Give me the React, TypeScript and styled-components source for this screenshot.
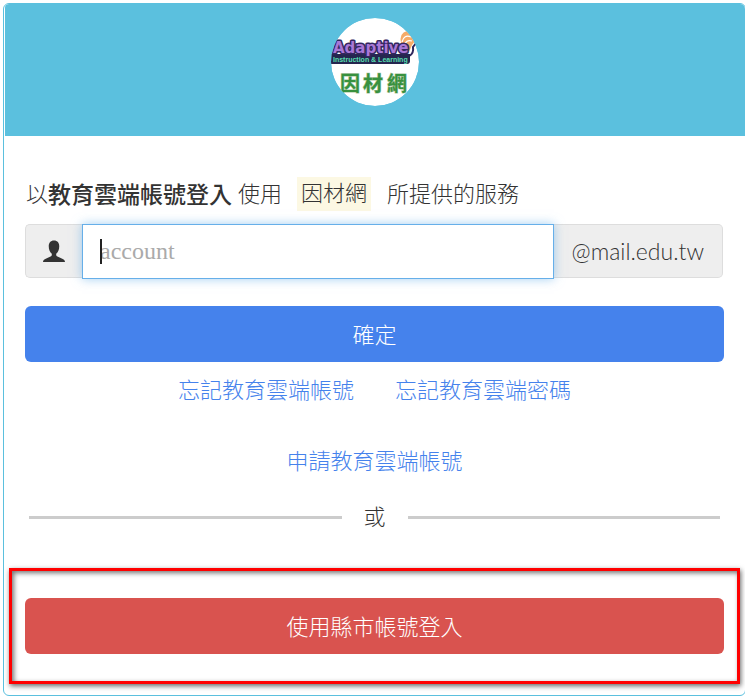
import React from "react";
import styled, { createGlobalStyle } from "styled-components";

const GlobalStyle = createGlobalStyle`
  *, *::before, *::after { box-sizing: border-box; }
  body {
    margin: 0;
    overflow-x: hidden;
    background: #fff;
    color: #333;
    font-family: Lato, "Noto Sans CJK TC", sans-serif;
    font-size: 22px;
    font-weight: 300;
    line-height: 32px;
  }
`;

const Card = styled.main`
  margin: 3px -1px 2px 3px;
  padding-left: 1px;
  border: 1px solid #5bc0de;
  border-radius: 6px;
  overflow: hidden;
`;

const Header = styled.header`
  display: flex;
  justify-content: center;
  padding: 14px 0 30px;
  border-radius: 4px 4px 0 0;
  background: #5bc0de;
`;

const LogoImage = styled.svg`
  display: block;
  width: 88px;
  height: 88px;
  border-radius: 50%;
`;

const LoginForm = styled.form`
  display: flex;
  flex-direction: column;
  padding: 40px 21px 0 20px;
`;

const Intro = styled.label`
  display: flex;
  align-items: center;
  height: 34px;
  padding-top: 1px;
  padding-left: 1px;
  white-space: pre;

  strong {
    font-size: 23px;
    font-weight: 500;
  }
`;

const ServiceName = styled.mark`
  margin: 0 16px 0 15px;
  padding: 0 4px 2px;
  background: #fcf8e3;
  color: inherit;
`;

const InputGroup = styled.div`
  display: flex;
  margin: 14px 1px 28px 0;
  height: 54px;
`;

const Addon = styled.span<{ $side: "left" | "right" }>`
  display: flex;
  align-items: center;
  justify-content: center;
  padding: 0 ${(p) => (p.$side === "left" ? 17 : 18)}px;
  border: 1px solid #ddd;
  border-radius: ${(p) => (p.$side === "left" ? "5px 0 0 5px" : "0 5px 5px 0")};
  border-${(p) => (p.$side === "left" ? "right" : "left")}: 0;
  background: #eee;
  font-size: 23px;
`;

const Field = styled.div`
  position: relative;
  flex: 1;
  min-width: 0;
  height: 55px;
`;

const AccountInput = styled.input`
  width: 100%;
  height: 100%;
  padding: 0 17px;
  border: 1px solid #66afe9;
  outline: 0;
  box-shadow: 0 0 10px rgba(102, 175, 233, 0.6);
  background: #fff;
  color: #333;
  font: 400 24px "Liberation Serif", serif;

  &::placeholder { color: #aaa; opacity: 1; }
`;

const Caret = styled.span`
  position: absolute;
  left: 18px;
  top: 15px;
  width: 2px;
  height: 25px;
  background: #222;
  pointer-events: none;
`;

const Button = styled.button<{ $color: string }>`
  width: 100%;
  height: 56px;
  padding: 2px 16px 0;
  border: 0;
  border-radius: 6px;
  background: ${(p) => p.$color};
  color: #fff;
  font: inherit;
  cursor: pointer;
`;

const Links = styled.nav`
  display: flex;
  flex-direction: column;
  gap: 39px;
  margin: 12px 0 24px;
`;

const LinkRow = styled.div`
  display: flex;
  justify-content: center;
  gap: 41px;
`;

const TextLink = styled.a`
  color: #4582ec;
  text-decoration: none;
`;

const Divider = styled.div`
  display: flex;
  align-items: center;
  gap: 22px;
  margin: 0 4px;

  &::before, &::after {
    content: "";
    flex: 1;
    height: 3px;
    background: #ccc;
  }
`;

const Highlight = styled.section`
  margin: 35px 5px 11px 4px;
  padding: 27px 13px;
  border: 3px solid #f00;
  box-shadow: 1px 2px 5px rgba(0, 0, 0, 0.6), inset 2px 2px 5px rgba(0, 0, 0, 0.55);
`;

const Logo = () => (
  <LogoImage viewBox="0 0 88 88" role="img" aria-label="Adaptive Instruction &amp; Learning 因材網">
    <circle cx="44" cy="44" r="44" fill="#fff" />
    <path d="M70 25 Q68 15 76 13 Q84 14 84 23 L81 27 L78 34 Z" fill="#f6ab68" />
    <path d="M71 24 Q73 16 80 19 M73 28 Q75 21 81 23" fill="none" stroke="#fff" strokeWidth="1.3" />
    <path d="M78 38 Q83 36 82 29 L86 24" fill="none" stroke="#2e285e" strokeWidth="2" strokeLinecap="round" />
    <path d="M0 36 H79 V43 Q79 46 76 46 H0 Z" fill="#25264f" />
    <text x="2" y="35" fontFamily="DejaVu Sans" fontWeight="700" fontSize="15" fill="#a978d6" stroke="#332760" strokeWidth="3" strokeLinejoin="round" paintOrder="stroke">Adaptive</text>
    <text x="2" y="44" fontFamily="Liberation Sans" fontWeight="700" fontSize="7" fill="#58dfb0">Instruction &amp; Learning</text>
    <text x="9 32 56" y="73" fontFamily="Noto Sans CJK TC" fontWeight="700" fontSize="20" fill="#38913f" stroke="#a9c6a0" strokeWidth="1" paintOrder="stroke">因材網</text>
  </LogoImage>
);

const UserIcon = () => (
  <svg width="22" height="23" viewBox="0 0 23 23" fill="#333" aria-hidden="true">
    <path d="M11.5 0C7.8 0 6 2.4 6 6c0 3.5 1.3 6.3 3.2 7.8v1.4c0 .7-.5 1.1-1.3 1.5l-4.5 2C1 19.8 0 20.5 0 22.5h23c0-2-1-2.7-3.4-3.8l-4.5-2c-.8-.4-1.3-.8-1.3-1.5v-1.4C15.7 12.3 17 9.5 17 6c0-3.6-1.8-6-5.5-6Z" />
  </svg>
);

export default function App() {
  return (
    <>
      <GlobalStyle />
      <Card>
        <Header><Logo /></Header>
        <LoginForm onSubmit={(e: React.FormEvent) => e.preventDefault()}>
          <Intro htmlFor="account">
            以<strong>教育雲端帳號登入</strong> 使用
            <ServiceName>因材網</ServiceName>
            所提供的服務
          </Intro>
          <InputGroup>
            <Addon $side="left"><UserIcon /></Addon>
            <Field>
              <AccountInput id="account" type="text" placeholder="account" />
              <Caret />
            </Field>
            <Addon $side="right">@mail.edu.tw</Addon>
          </InputGroup>
          <Button type="submit" $color="#4582ec">確定</Button>
          <Links>
            <LinkRow>
              <TextLink href="#forgot-account">忘記教育雲端帳號</TextLink>
              <TextLink href="#forgot-password">忘記教育雲端密碼</TextLink>
            </LinkRow>
            <LinkRow>
              <TextLink href="#apply">申請教育雲端帳號</TextLink>
            </LinkRow>
          </Links>
          <Divider>或</Divider>
        </LoginForm>
        <Highlight>
          <Button type="button" $color="#d9534f">使用縣市帳號登入</Button>
        </Highlight>
      </Card>
    </>
  );
}
